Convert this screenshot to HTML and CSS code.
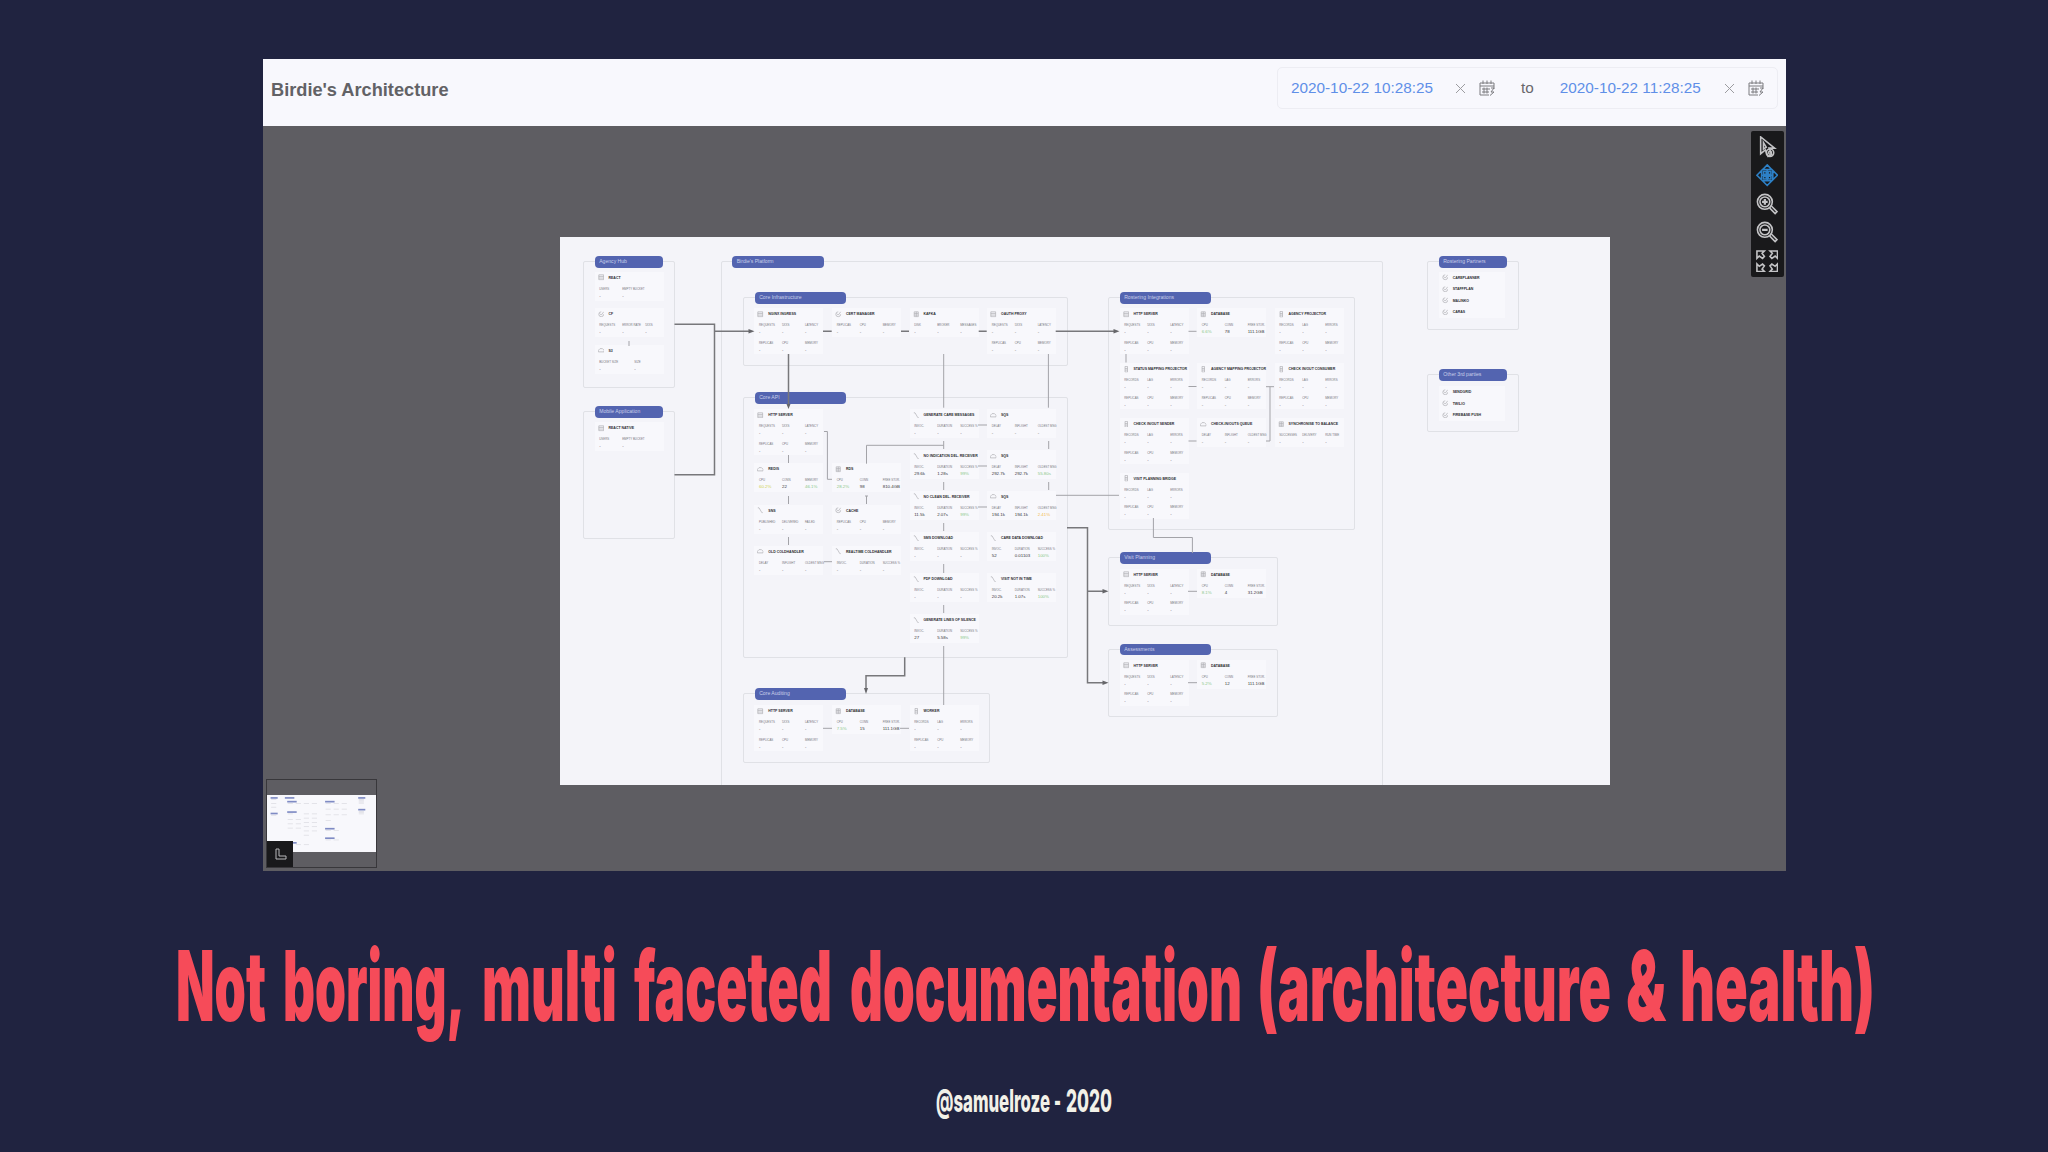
FILE: index.html
```
<!DOCTYPE html>
<html lang="en">
<head>
    <meta charset="UTF-8">
    <meta name="viewport" content="width=device-width, initial-scale=1.0">
    <title>Birdie's Architecture</title>
    <link rel="stylesheet" href="styles.css">
</head>
<body>
    <section class="slide">
        <div class="app">
            <header class="app-header">
                <div class="app-title">Birdie's Architecture</div>
                <div class="date-range">
                    <span class="date">2020-10-22 10:28:25</span>
                    <svg class="clear" viewBox="0 0 11 11"><path d="M1 1l9 9M10 1l-9 9"/></svg>
                    <svg class="calendar" viewBox="0 0 16 16"><use href="#calendar"/></svg>
                    <span class="to">to</span>
                    <span class="date">2020-10-22 11:28:25</span>
                    <svg class="clear" viewBox="0 0 11 11"><path d="M1 1l9 9M10 1l-9 9"/></svg>
                    <svg class="calendar" viewBox="0 0 16 16"><use href="#calendar"/></svg>
                </div>
            </header>

            <main class="viewer">
                <div class="canvas" id="canvas">
                    <svg class="edges" viewBox="0 0 1050 548">
                        <g class="thick">
                            <path d="M114.5 87.3H154.5V237.7H114.5M154.5 94.3H190"/>
                            <path d="M228.5 117V167M495.7 94.3H555"/>
                            <path d="M263 94.3h8.7M341 94.3h8M418.7 94.3h8"/>
                            <path d="M507 290.7H527.5V445.7H544M527.5 354.3H544"/>
                            <path d="M344.7 420.3V438.7H306V452"/>
                        </g>
                        <g class="thin">
                            <path d="M383.7 117V170.7M488.4 117V170.7"/>
                            <path d="M228.5 218v8M228.5 259v8M228.5 300v8"/>
                            <path d="M264 194.5H267.4V242.3H272"/>
                            <path d="M306.5 226.7V208.3H383.7M306.5 259v8M305 259h3"/>
                            <path d="M383.7 204v8M383.7 245v8M383.7 286v8M383.7 327v9M383.7 368v8M383.7 409V468"/>
                            <path d="M488.7 204v8M488.7 245v8M496 258.3H559"/>
                            <path d="M418 188h9M418 229h9M418 270h9M264 324.7h8M69 104v5"/>
                            <path d="M263 491.3h9M340 491.3h9M628 354.3h9M628 445.7h9"/>
                            <path d="M628.5 94.3h8M566 117v8.5M628.5 149.5h8M628.5 204h8"/>
                            <path d="M706 149.7h8M710 149.7V204h-4"/>
                            <path d="M593.4 281V300.5H632.4V316"/>
                        </g>
                        <g class="heads">
                            <path d="M194.5 94.3l-6-2.2v4.4zM559.5 94.3l-6-2.2v4.4z"/>
                            <path d="M548.5 354.3l-6-2.2v4.4zM548.5 445.7l-6-2.2v4.4z"/>
                            <path d="M228.5 172l-2-5h4zM306 457l-2-6h4z"/>
                        </g>
                    </svg>
                </div>

                <div class="toolbar">
                    <svg viewBox="0 0 24 24"><path d="M5 1v18l5-4 3 7 4-2-3-7h6z"/><path d="M8 7v7l3-2z"/><circle cx="15" cy="18" r="4"/><circle cx="15" cy="18" r="1.5"/></svg>
                    <svg class="active" viewBox="0 0 24 24"><path d="M12 1l5 5H7zM12 23l5-5H7zM1 12l5-5v10zM23 12l-5-5v10z"/><path d="M12 6v12M6 12h12M8 8h3v3H8zM13 8h3v3h-3zM8 13h3v3H8zM13 13h3v3h-3z"/></svg>
                    <svg viewBox="0 0 24 24"><circle cx="9.500" cy="9.500" r="8"/><circle cx="9.500" cy="9.500" r="5.300"/><path class="bold" d="M6.500 9.500h6M9.500 6.500v6"/><path d="M14.500 16l6 6 2-2-6-6"/></svg>
                    <svg viewBox="0 0 24 24"><circle cx="9.500" cy="9.500" r="8"/><circle cx="9.500" cy="9.500" r="5.300"/><path class="bold" d="M6.500 9.500h6"/><path d="M14.500 16l6 6 2-2-6-6"/></svg>
                    <svg viewBox="0 0 24 24"><path d="M1 1h8l-2.500 2.500L9 7 7 9 3.500 6.500 1 9zM23 1h-8l2.500 2.500L15 7l2 2 3.500-2.500L23 9zM1 23h8l-2.500-2.500L9 17l-2-2-3.500 2.500L1 15zM23 23h-8l2.500-2.500L15 17l2-2 3.500 2.500L23 15z"/></svg>
                </div>

                <div class="minimap">
                    <svg class="minimap-page" viewBox="0 0 1050 548" preserveAspectRatio="none" id="minimap"></svg>
                    <div class="minimap-toggle">
                        <svg viewBox="0 0 12 12"><path d="M1 1h3v7h7v3H1z"/></svg>
                    </div>
                </div>
            </main>
        </div>

        <h1>
            <svg viewBox="0 0 2048 120">
                <text x="176" y="90.700" textLength="90" lengthAdjust="spacingAndGlyphs">Not</text>
                <text x="283" y="90.700" textLength="182" lengthAdjust="spacingAndGlyphs">boring,</text>
                <text x="482" y="90.700" textLength="135" lengthAdjust="spacingAndGlyphs">multi</text>
                <text x="634" y="90.700" textLength="198" lengthAdjust="spacingAndGlyphs">faceted</text>
                <text x="850" y="90.700" textLength="392" lengthAdjust="spacingAndGlyphs">documentation</text>
                <text x="1257" y="90.700" textLength="354" lengthAdjust="spacingAndGlyphs">(architecture</text>
                <text x="1626" y="90.700" textLength="40" lengthAdjust="spacingAndGlyphs">&amp;</text>
                <text x="1680" y="90.700" textLength="195" lengthAdjust="spacingAndGlyphs">health)</text>
            </svg>
        </h1>

        <footer>
            <svg viewBox="0 0 2048 40">
                <text x="936" y="32" textLength="114" lengthAdjust="spacingAndGlyphs">@samuelroze</text>
                <text x="1054" y="32" textLength="7" lengthAdjust="spacingAndGlyphs">-</text>
                <text x="1066" y="32" textLength="46" lengthAdjust="spacingAndGlyphs">2020</text>
            </svg>
        </footer>
    </section>

    <svg class="symbols">
        <symbol id="calendar" viewBox="0 0 16 16"><path d="M1 3h14v6M1 3v12h9M15 12l-4 3.500M1 6h14M4 .5V4M8 .5V4M12 .5V4M3 9h8M3 12h7M5 7.500v6M8 7.500v6M12 8h3l-3 4h3"/></symbol>
        <symbol id="server" viewBox="0 0 8 8"><path d="M1 1h6v6H1zM1 3h6M1 5h6"/></symbol>
        <symbol id="worker" viewBox="0 0 8 8"><path d="M2.500 .5h3v7h-3zM2.500 3h3M2.500 5h3"/></symbol>
        <symbol id="queue" viewBox="0 0 8 8"><path d="M.5 6V4l2-2h3l2 2v2z"/></symbol>
        <symbol id="lambda" viewBox="0 0 8 8"><path d="M1 1h1.500l3.500 6h1"/></symbol>
        <symbol id="cloud" viewBox="0 0 8 8"><path d="M4 1a3 3 0 1 0 3 3M2 3l2 2 3-4"/></symbol>
        <symbol id="database" viewBox="0 0 8 8"><path d="M1.500 1h5v6h-5zM1.500 3h5M1.500 5h5M4 1v6"/></symbol>
    </svg>

    <script src="script.js"></script>
</body>
</html>
```

FILE: styles.css
```
body {
    margin: 0;
    background-color: #202340;
    font-family: "Liberation Sans", Arial, sans-serif;
}

.slide {
    display: flex;
    flex-direction: column;
    align-items: center;
    height: 1152px;
    overflow: hidden;
}

.symbols {
    display: none;
}

.app {
    width: 1523px;
    height: 812px;
    margin-top: 59px;
    flex: none;
    display: flex;
    flex-direction: column;
}

.app-header {
    height: 66.5px;
    box-sizing: border-box;
    padding: 0 8px 0 8.5px;
    background-color: #f8f8fd;
    display: flex;
    justify-content: space-between;
    align-items: flex-start;
}

.app-title {
    margin-top: 20px;
    font-size: 18.2px;
    line-height: 22px;
    font-weight: bold;
    color: #626266;
}

.date-range {
    display: flex;
    align-items: center;
    box-sizing: border-box;
    width: 501px;
    height: 42px;
    margin-top: 8px;
    padding-left: 13.5px;
    border: 1px solid #ededf3;
    border-radius: 5px;
    font-size: 15.3px;
}

.date {
    width: 142px;
    color: #5f8fe8;
    white-space: nowrap;
}

.clear {
    width: 11px;
    height: 11px;
    margin-left: 22px;
    fill: none;
    stroke: #9c9ca0;
}

.calendar {
    width: 16px;
    height: 16px;
    margin-left: 13px;
    fill: none;
    stroke: #7c7c80;
}

.to {
    margin: 0 26px 0 26px;
    color: #68686c;
}

.viewer {
    position: relative;
    flex: 1;
    background-color: #5e5d62;
}

.canvas {
    position: absolute;
    left: 297.5px;
    top: 111.5px;
    width: 1050px;
    height: 548px;
    background-color: #f4f4f9;
    overflow: hidden;
}

.group {
    position: absolute;
    box-sizing: border-box;
    border: 1px solid #e0e1e6;
    border-radius: 2px;
}

.group-label {
    position: absolute;
    height: 11.5px;
    border-radius: 4px;
    background-color: #5364b0;
    color: #c9cfea;
    font-size: 5.1px;
    line-height: 11.5px;
    text-indent: 4.7px;
    white-space: nowrap;
}

.edges {
    position: absolute;
    left: 0;
    top: 0;
    width: 1050px;
    height: 548px;
    fill: none;
}

.thick {
    stroke: #77777b;
    stroke-width: 1.5;
}

.thin {
    stroke: #a3a3a8;
    stroke-width: 1;
}

.heads {
    fill: #66666a;
}

.node {
    position: absolute;
    width: 69px;
    background-color: #f8f8fc;
    white-space: nowrap;
}

.node-title {
    display: flex;
    align-items: center;
    gap: 4.5px;
    height: 12px;
    padding-left: 3px;
    font-size: 3.5px;
    font-weight: bold;
    color: #2c2c30;
}

.node-title svg {
    width: 6.5px;
    height: 6.5px;
    flex: none;
    fill: none;
    stroke: #aaaaae;
    stroke-width: 0.8;
}

.node-title use {
    width: 6.5px;
    height: 6.5px;
}

.metrics {
    display: grid;
    grid-template-columns: 23px 23px 23px;
    row-gap: 5.5px;
    padding: 3px 0 0 4.7px;
}

.metric {
    height: 12px;
    font-size: 2.9px;
    line-height: 5px;
    color: #77777c;
}

.metric b {
    display: block;
    font-size: 4.4px;
    line-height: 7.5px;
    font-weight: normal;
    color: #36363a;
}

.metric .good {
    color: #8cc88a;
}

.metric .warn {
    color: #d0d250;
}

.metric .bad {
    color: #f3b84e;
}

.node.wide .metrics {
    grid-template-columns: 35px 35px;
}

.node.plain {
    width: 66px;
}

.toolbar {
    position: absolute;
    right: 2px;
    top: 5.5px;
    display: flex;
    flex-direction: column;
    align-items: center;
    gap: 6px;
    width: 33px;
    height: 146px;
    box-sizing: border-box;
    padding-top: 5px;
    border-radius: 2px;
    background-color: #19191b;
}

.toolbar svg {
    width: 22.4px;
    height: 22.4px;
    fill: none;
    stroke: #c4c4c6;
    stroke-width: 1.7;
}

.toolbar .bold {
    stroke-width: 2.4;
}

.toolbar .active {
    stroke: #2d80c6;
}

.minimap {
    position: absolute;
    left: 3px;
    bottom: 3px;
    width: 111px;
    height: 89px;
    box-sizing: border-box;
    padding-top: 15px;
    border: 1px solid #38373b;
}

.minimap-page {
    display: block;
    width: 109px;
    height: 57px;
    background-color: #f8f8fc;
}

.minimap-page .tag {
    fill: #7f8bc4;
}

.minimap-page .mark {
    fill: #dcdce2;
}

.minimap-toggle {
    position: absolute;
    left: 0;
    bottom: 0;
    display: flex;
    align-items: center;
    justify-content: center;
    width: 26px;
    height: 26px;
    background-color: #19191b;
}

.minimap-toggle svg {
    width: 12px;
    height: 12px;
    margin-left: 3px;
    fill: none;
    stroke: #b9b9bb;
}

h1 {
    margin: 59px 0 0;
    width: 2048px;
    height: 120px;
    flex: none;
}

h1 svg,
footer svg {
    display: block;
    width: 100%;
    height: 100%;
    overflow: visible;
    font-family: Inter, sans-serif;
}

h1 text {
    font-size: 97px;
    font-weight: 900;
    fill: #f64b59;
}

footer {
    width: 2048px;
    height: 40px;
    margin-top: 30px;
    flex: none;
}

footer text {
    font-size: 31.6px;
    font-weight: 800;
    fill: #f2f1e8;
}
```

FILE: script.js
```
// x, y, width, height, label, label width
const groups = [
    [23, 24, 91.5, 127, 'Agency Hub', 68.5],
    [23, 174, 91.5, 128, 'Mobile Application', 68.5],
    [160.5, 24, 662, 540, "Birdie's Platform", 91.5],
    [183, 60, 324.5, 69, 'Core Infrastructure', 91.5],
    [183, 160, 324.5, 261, 'Core API', 91.5],
    [183, 456, 247, 70, 'Core Auditing', 91.5],
    [548, 60, 246.5, 233, 'Rostering Integrations', 91.5],
    [548, 320, 169.5, 69, 'Visit Planning', 91.5],
    [548, 411.5, 169.5, 68, 'Assessments', 91.5],
    [867, 24, 91.5, 68.5, 'Rostering Partners', 68.5],
    [867, 137, 91.5, 58, 'Other 3rd parties', 68.5]
];

const http = 'REQUESTS,5XXS,LATENCY,REPLICAS,CPU,MEMORY';
const work = 'RECORDS,LAG,ERRORS,REPLICAS,CPU,MEMORY';
const pods = 'REPLICAS,CPU,MEMORY';
const db = 'CPU,CONN,FREE STOR.';
const fn = 'INVOC.,DURATION,SUCCESS %';
const sqs = 'DELAY,INFLIGHT,OLDEST MSG';

// x, middle of the title, icon, title, metrics, values
const nodes = [
    [34.5, 40.7, 'server', 'REACT', 'USERS,EMPTY BUCKET'],
    [34.5, 77, 'cloud', 'CF', 'REQUESTS,ERROR RATE,5XXS'],
    [34.5, 113.7, 'queue', 'S3', 'BUCKET SIZE,SIZE', '', 'wide'],
    [34.5, 191.3, 'server', 'REACT NATIVE', 'USERS,EMPTY BUCKET'],
    [194.3, 77.3, 'server', 'NGINX INGRESS', http],
    [272, 77.3, 'cloud', 'CERT MANAGER', pods],
    [349.5, 77.3, 'database', 'KAFKA', 'DISK,BROKER,MESSAGES'],
    [427, 77.3, 'server', 'OAUTH PROXY', http],
    [194.3, 178, 'server', 'HTTP SERVER', http],
    [194.3, 232.3, 'queue', 'REDIS', 'CPU,CONN,MEMORY', '60.2%:warn,22,46.1%:good'],
    [272, 232.3, 'database', 'RDS', db, '28.2%:good,98,810.4GB'],
    [194.3, 273.7, 'lambda', 'SNS', 'PUBLISHED,DELIVERED,FAILED'],
    [272, 273.7, 'cloud', 'CACHE', pods],
    [194.3, 314.7, 'queue', 'OLD COLDHANDLER', sqs],
    [272, 314.7, 'lambda', 'REALTIME COLDHANDLER', fn],
    [349.5, 178, 'lambda', 'GENERATE CARE MESSAGES', fn],
    [427, 178, 'queue', 'SQS', sqs],
    [349.5, 219, 'lambda', 'NO INDICATION DEL. RECEIVER', fn, '29.6k,1.28s,99%:good'],
    [427, 219, 'queue', 'SQS', sqs, '292.7k,292.7k,55.80s:good'],
    [349.5, 259.7, 'lambda', 'NO CLEAN DEL. RECEIVER', fn, '11.5k,2.07s,99%:good'],
    [427, 259.7, 'queue', 'SQS', sqs, '194.1k,194.1k,2.41%:bad'],
    [349.5, 301, 'lambda', 'SMS DOWNLOAD', fn],
    [427, 301, 'lambda', 'CARE DATA DOWNLOAD', fn, '52,0.01103,100%:good'],
    [349.5, 342, 'lambda', 'PDF DOWNLOAD', fn],
    [427, 342, 'lambda', 'VISIT NOT IN TIME', fn, '20.2k,1.07s,100%:good'],
    [349.5, 383, 'lambda', 'GENERATE LINES OF SILENCE', fn, '27,5.58s,99%:good'],
    [194.3, 474.3, 'server', 'HTTP SERVER', http],
    [272, 474.3, 'database', 'DATABASE', db, '7.5%:good,15,111.1GB'],
    [349.5, 474.3, 'worker', 'WORKER', work],
    [559.5, 77.3, 'server', 'HTTP SERVER', http],
    [637, 77.3, 'database', 'DATABASE', db, '6.6%:good,78,111.1GB'],
    [714.5, 77.3, 'worker', 'AGENCY PROJECTOR', work],
    [559.5, 132.3, 'worker', 'STATUS MAPPING PROJECTOR', work],
    [637, 132.3, 'worker', 'AGENCY MAPPING PROJECTOR', work],
    [714.5, 132.3, 'worker', 'CHECK IN/OUT CONSUMER', work],
    [559.5, 187, 'worker', 'CHECK IN/OUT SENDER', work],
    [637, 187, 'queue', 'CHECK-IN/OUTS QUEUE', sqs],
    [714.5, 187, 'database', 'SYNCHRONISE TO BALANCE', 'SUCCESSES,DELIVERY,RUN TIME'],
    [559.5, 241.7, 'worker', 'VISIT PLANNING BRIDGE', work],
    [559.5, 337.7, 'server', 'HTTP SERVER', http],
    [637, 337.7, 'database', 'DATABASE', db, '8.1%:good,4,31.2GB'],
    [559.5, 428.7, 'server', 'HTTP SERVER', http],
    [637, 428.7, 'database', 'DATABASE', db, '5.2%:good,12,111.1GB'],
    [878.7, 40.7, 'cloud', 'CAREPLANNER'],
    [878.7, 52, 'cloud', 'STAFFPLAN'],
    [878.7, 63.5, 'cloud', 'MALINKO'],
    [878.7, 75, 'cloud', 'CARAS'],
    [878.7, 155, 'cloud', 'SENDGRID'],
    [878.7, 166.5, 'cloud', 'TWILIO'],
    [878.7, 178, 'cloud', 'FIREBASE PUSH']
];

const canvas = document.getElementById('canvas');
let groupHtml = '';
let labelHtml = '';
let nodeHtml = '';
let mapHtml = '';

groups.forEach(([x, y, w, h, label, labelWidth]) => {
    const lx = x + 11.5;
    groupHtml += `<div class="group" style="left:${x}px;top:${y}px;width:${w}px;height:${h}px"></div>`;
    labelHtml += `<div class="group-label" style="left:${lx}px;top:${y - 4.7}px;width:${labelWidth}px">${label}</div>`;
    mapHtml += `<rect class="tag" x="${lx}" y="${y - 4}" width="${labelWidth}" height="16"/>`;
});

nodes.forEach(([x, y, icon, title, labels, values, extra]) => {
    const names = labels ? labels.split(',') : [];
    const vals = values ? values.split(',') : [];
    const metrics = names.map((name, i) => {
        const [value, state] = (vals[i] || '-').split(':');
        return `<div class="metric">${name}<b class="${state || ''}">${value}</b></div>`;
    }).join('');
    const height = names.length > 3 ? 46 : names.length ? 29 : 12;
    nodeHtml += `<div class="node ${extra || (names.length ? '' : 'plain')}" style="left:${x}px;top:${y - 6}px;height:${height}px">
        <div class="node-title"><svg><use href="#${icon}"/></svg>${title}</div>
        <div class="metrics">${metrics}</div>
    </div>`;
    mapHtml += `<rect class="mark" x="${x + 5}" y="${y}" width="50" height="7"/>`;
});

canvas.insertAdjacentHTML('afterbegin', groupHtml + nodeHtml + labelHtml);
document.getElementById('minimap').innerHTML = mapHtml;
```
